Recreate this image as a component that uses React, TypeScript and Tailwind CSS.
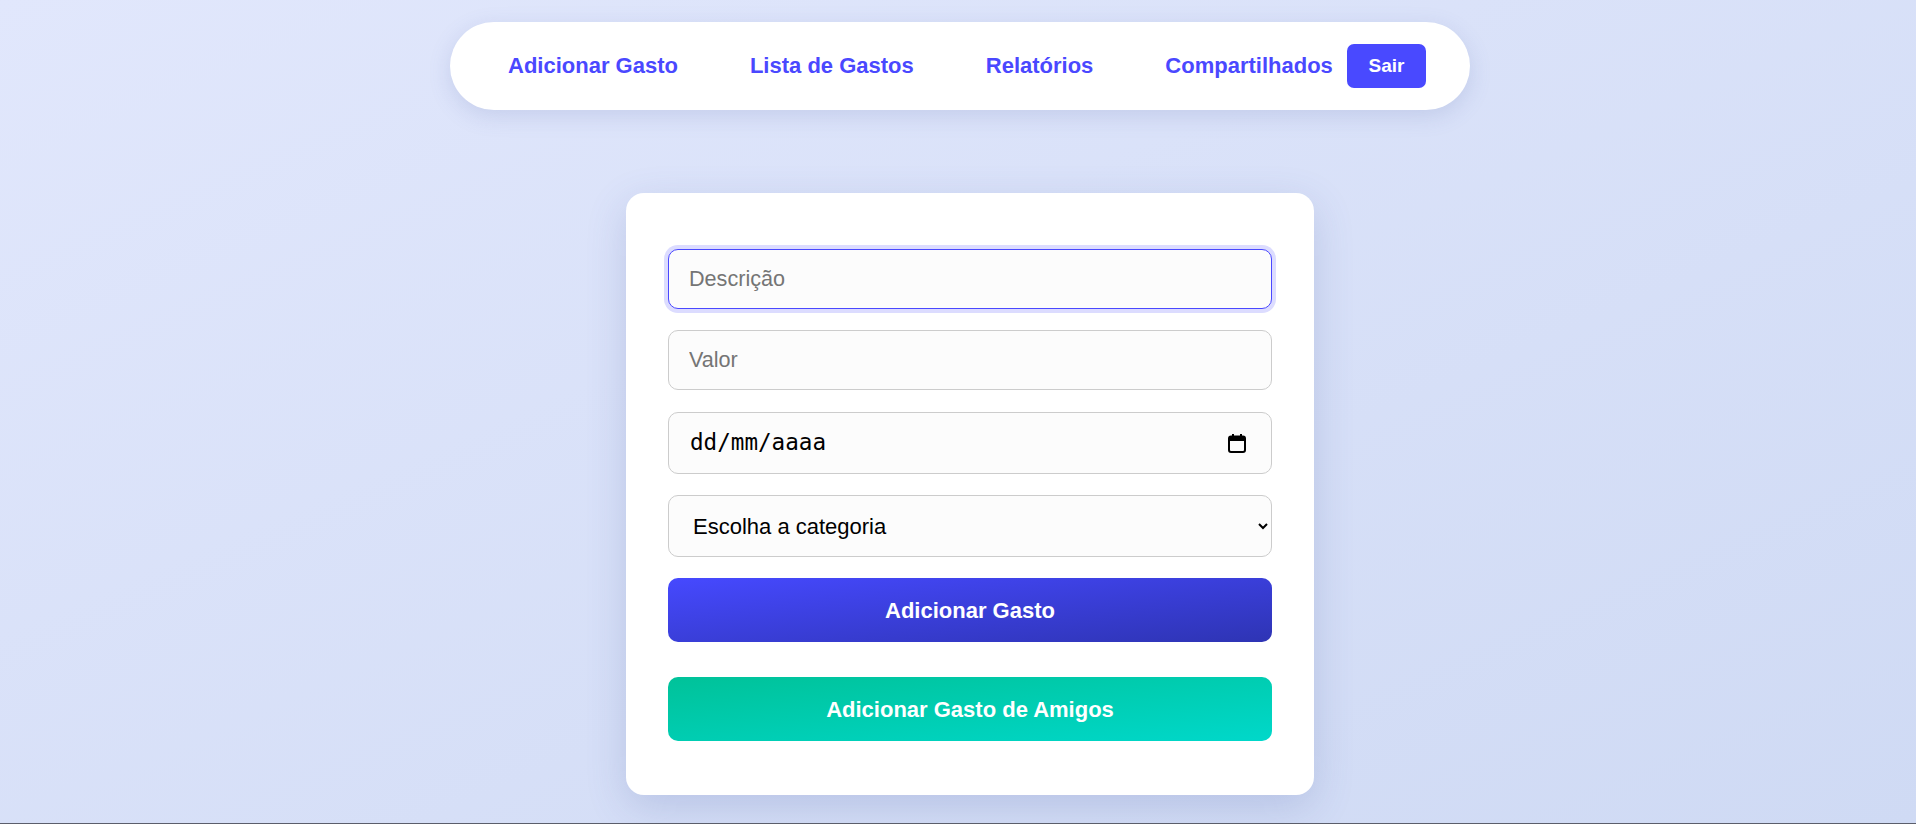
import { useState } from "react";

function CalendarIcon() {
  return (
    <svg width="18" height="20" viewBox="0 0 18 20" aria-hidden="true">
      <rect x="1" y="3.5" width="16" height="15.5" rx="2" fill="none" stroke="#000" strokeWidth="2" />
      <rect x="1" y="3.5" width="16" height="4.5" fill="#000" />
      <rect x="4" y="1" width="2" height="4" fill="#000" />
      <rect x="12" y="1" width="2" height="4" fill="#000" />
    </svg>
  );
}

export default function App() {
  const [descricao, setDescricao] = useState("");
  const [valor, setValor] = useState("");
  const [categoria, setCategoria] = useState("");

  const links = ["Adicionar Gasto", "Lista de Gastos", "Relatórios", "Compartilhados"];

  return (
    <div className="min-h-screen flex flex-col bg-gradient-to-br from-[#e1e7fc] to-[#cfdaf4] font-['Liberation_Sans',Arial,sans-serif]">
      <div className="flex-1 flex flex-col items-center">
        {/* Top navigation */}
        <nav className="mt-[22px] ml-[4px] w-[1020px] h-[88px] bg-white rounded-full flex items-center pl-[58px] pr-[44px] shadow-[0_6px_22px_rgba(90,105,170,0.18)]">
          <div className="flex items-center gap-[72px]">
            {links.map((l) => (
              <a key={l} href="#" className="text-[22px] font-bold text-[#4a48ff] leading-none whitespace-nowrap">
                {l}
              </a>
            ))}
          </div>
          <button
            type="button"
            className="ml-[14px] w-[81px] h-[44px] rounded-[7px] bg-[#4949ff] text-white text-[19px] font-bold"
          >
            Sair
          </button>
        </nav>

        {/* Form card */}
        <div className="mt-[83px] ml-[24px] w-[688px] bg-white rounded-[18px] px-[42px] pt-[56px] pb-[54px] shadow-[0_12px_40px_rgba(70,90,160,0.2)]">
          <form className="flex flex-col" onSubmit={(e) => e.preventDefault()}>
            <input
              autoFocus
              value={descricao}
              onChange={(e) => setDescricao(e.target.value)}
              placeholder="Descrição"
              className="h-[60px] w-full rounded-[10px] border border-[#4a48ff] bg-[#fcfcfc] px-[20px] text-[21.6px] text-black placeholder:text-[#757575] outline-none ring-4 ring-[#dcdcff]"
            />
            <input
              value={valor}
              onChange={(e) => setValor(e.target.value)}
              placeholder="Valor"
              className="mt-[21px] h-[60px] w-full rounded-[10px] border border-[#cccccc] bg-[#fcfcfc] px-[20px] text-[21.6px] text-black placeholder:text-[#757575] outline-none"
            />
            <div className="mt-[22px] h-[62px] w-full rounded-[10px] border border-[#cccccc] bg-[#fcfcfc] pl-[21px] pr-[25px] flex items-center justify-between">
              <span className="font-['DejaVu_Sans_Mono',monospace] text-[22.6px] text-black">dd/mm/aaaa</span>
              <CalendarIcon />
            </div>
            <select
              value={categoria}
              onChange={(e) => setCategoria(e.target.value)}
              className="mt-[21px] h-[62px] w-full rounded-[10px] border border-[#cccccc] bg-[#fcfcfc] px-[20px] text-[22px] text-black outline-none"
            >
              <option value="">Escolha a categoria</option>
              <option value="alimentacao">Alimentação</option>
              <option value="transporte">Transporte</option>
              <option value="lazer">Lazer</option>
            </select>
            <button
              type="submit"
              className="mt-[21px] h-[64px] w-full rounded-[10px] bg-gradient-to-br from-[#4649ff] to-[#2e34b4] text-white text-[22px] font-bold"
            >
              Adicionar Gasto
            </button>
            <button
              type="button"
              className="mt-[35px] h-[64px] w-full rounded-[10px] bg-gradient-to-br from-[#00c299] to-[#00d8ca] text-white text-[22px] font-bold"
            >
              Adicionar Gasto de Amigos
            </button>
          </form>
        </div>
      </div>
      <div className="h-px bg-[#5b5e6b]" />
    </div>
  );
}
